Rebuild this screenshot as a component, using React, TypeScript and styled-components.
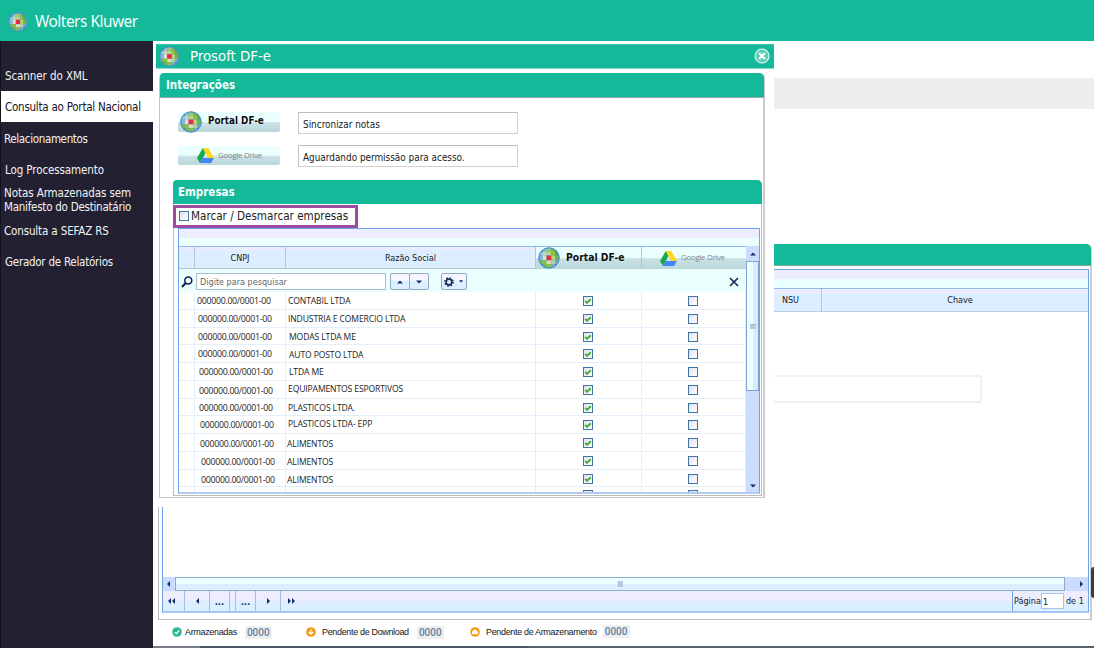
import React from "react";
import styled, { createGlobalStyle, css } from "styled-components";

const GREEN = "#13b999";
const UI = '"DejaVu Sans Condensed", "DejaVu Sans", sans-serif';
const HUM = '"Noto Sans", "Open Sans", sans-serif';

const Global = createGlobalStyle`
  * { box-sizing: border-box; }
  body { margin: 0; background: #fff; }
  button, input { margin: 0; padding: 0; border: 0; font: inherit; color: inherit; outline: 0; border-radius: 0; }
`;

const Page = styled.div`
  position: relative;
  width: 1094px;
  height: 648px;
  overflow: hidden;
  background: #fff;
  display: flex;
  flex-direction: column;
  font-family: ${UI};
  color: #222;
`;

const TopBar = styled.header`
  height: 41px;
  flex: none;
  display: flex;
  align-items: center;
  gap: 7px;
  padding: 2px 0 0 8px;
  background: ${GREEN};
  color: #f3fffc;
  font: 15.4px/39px ${HUM};
  letter-spacing: -0.48px;
`;

const Body = styled.div`
  display: flex;
  height: 607px;
`;

const Sidebar = styled.nav`
  width: 153px;
  flex: none;
  padding-top: 20px;
  background: #232131;
  border-left: 1px solid #15131f;
`;

const NavItem = styled.a<{ $h: number; $active?: boolean; $x?: number }>`
  display: flex;
  flex-direction: column;
  justify-content: center;
  height: ${(p) => p.$h}px;
  padding-left: ${(p) => p.$x ?? 3}px;
  font-size: 11.5px;
  line-height: 14px;
  white-space: nowrap;
  color: ${(p) => (p.$active ? "#15131f" : "#f2f2f5")};
  background: ${(p) => (p.$active ? "#fff" : "transparent")};
`;

const NavLine = styled.span<{ $track: number }>`
  letter-spacing: ${(p) => p.$track}px;
`;

const Main = styled.main`
  flex: 1;
  display: flex;
  flex-direction: column;
  padding: 37px 0 0 5px;
`;

const GrayBand = styled.div`
  height: 31px;
  margin-bottom: 135px;
  background: #eee;
`;

const BackPanel = styled.section`
  width: 934px;
  height: 376px;
  display: flex;
  flex-direction: column;
  border: 1px solid #bdbdbd;
  border-top: 0;
  border-right: 2px solid #ccc;
  border-radius: 0 5px 0 0;
`;

const BackTitle = styled.div`
  height: 22px;
  margin-right: -1px;
  background: ${GREEN};
  border-bottom: 1px solid #82a89f;
  border-radius: 0 5px 0 0;
`;

const BackGrid = styled.div`
  margin: 3px 1px 0 3px;
  height: 344px;
  display: flex;
  flex-direction: column;
  border: 1px solid #6da3ea;
  border-bottom: 2px solid #a3c6f5;
`;

const GroupStrip = styled.div<{ $h?: number }>`
  height: ${(p) => p.$h ?? 17}px;
  flex: none;
  background: linear-gradient(#eeecff 0 52%, #ebffff 52%);
`;

const BackHead = styled.div`
  display: flex;
  height: 24px;
  border-top: 1px solid #8fb6ee;
  border-bottom: 1px solid #bccfdd;
  background: linear-gradient(#ebecff 0 5px, #dceeff 5px);
  font-size: 9px;
  line-height: 22px;
  text-align: center;
`;

const BackCol = styled.div<{ $w?: number }>`
  ${(p) => (p.$w ? css`width: ${p.$w}px; border-right: 1px solid #b4c6d4;` : css`flex: 1; padding-left: 10px;`)}
`;

const NsuLabel = styled.div`
  width: 61px;
  margin-left: auto;
`;

const BackBody = styled.div`
  flex: 1;
  padding-top: 63px;
`;

const GhostInput = styled.div`
  width: 819px;
  height: 28px;
  border: 2px solid #efeff6;
  border-radius: 3px;
`;

const HScroll = styled.div`
  height: 14px;
  display: flex;
  background: #ccdcff;
`;

const HArrow = styled.div<{ $w: number; $push?: number; $pull?: number }>`
  width: ${(p) => p.$w}px;
  padding-left: ${(p) => p.$push ?? 0}px;
  padding-right: ${(p) => p.$pull ?? 0}px;
  display: grid;
  place-items: center;
`;

const HThumb = styled.div`
  flex: 1;
  display: grid;
  place-items: center;
  border: 1px solid #8aaecb;
  background: linear-gradient(#ebffff 50%, #dceeff 50%);
`;

const Grip = styled.i<{ $v?: boolean }>`
  width: ${(p) => (p.$v ? 6 : 5)}px;
  height: ${(p) => (p.$v ? 5 : 6)}px;
  background: #b5cce4;
  border-left: ${(p) => (p.$v ? 0 : 1)}px solid #9db8d2;
  border-top: ${(p) => (p.$v ? 1 : 0)}px solid #9db8d2;
`;

const Pager = styled.div`
  height: 20px;
  display: flex;
  background: linear-gradient(#eeecff 48%, #dceeff 48%);
  font-size: 9.5px;
`;

const PagerCell = styled.button<{ $w: number; $pull?: number }>`
  width: ${(p) => p.$w}px;
  padding-right: ${(p) => p.$pull ?? 0}px;
  background: none;
  border-right: 1px solid #9ebfdf;
  display: grid;
  place-items: center;
  color: #10316b;
  font-weight: bold;
`;

const PagerSpace = styled.div`
  flex: 1;
  padding-left: 6px;
  display: flex;
  align-items: center;
`;

const PageNum = styled.div`
  width: 76px;
  display: flex;
  align-items: center;
  padding-left: 1px;
  border-left: 1px solid #6da3ea;
  color: #222;
  font-size: 9px;
  white-space: nowrap;
  input {
    width: 23px;
    height: 16px;
    padding: 2px 0 0 1px;
    margin: 0 2px 0 0;
    border: 1px solid #a5c5ef;
    background: #fff;
    font-family: ${UI};
  }
`;

const Status = styled.footer`
  height: 24px;
  margin-bottom: 2px;
  display: flex;
  align-items: center;
  padding-left: 14px;
  font: 9px "Liberation Sans", Arial, sans-serif;
  letter-spacing: -0.34px;
  color: #16161c;
`;

const StatusItem = styled.div<{ $w: number; $gap: number }>`
  width: ${(p) => p.$w}px;
  display: flex;
  align-items: center;
  white-space: nowrap;
  svg { margin-right: ${(p) => p.$gap}px; flex: none; }
`;

const Counter = styled.b<{ $up?: boolean }>`
  margin: ${(p) => (p.$up ? "-2px 0 0 6px" : "0 0 0 8px")};
  width: 27px;
  height: 13px;
  background: #eeeeef;
  color: #64809b;
  font: 500 10px/13px Roboto, sans-serif;
  letter-spacing: 0;
  text-align: center;
`;

const BottomStrip = styled.div`
  height: 2px;
  margin-left: -5px;
  background: linear-gradient(90deg, #777d85 0 5%, #4c5562 5% 40%, #59616c 40%);
`;

const SideTab = styled.div`
  position: absolute;
  right: 0;
  top: 567px;
  width: 3px;
  height: 31px;
  border-radius: 3px 0 0 3px;
  background: #3c3c3e;
`;

const Dialog = styled.div`
  position: absolute;
  left: 155px;
  top: 43px;
  width: 619px;
  height: 464px;
  background: #fff;
`;

const DialogBar = styled.div`
  display: flex;
  align-items: center;
  height: 25px;
  margin: 1px 0 0 1px;
  padding: 0 4px 0 3px;
  background: ${GREEN};
  border-top: 1px solid #3fc7ad;
  border-bottom: 1px solid #8fdccc;
  color: #fff;
  svg { flex: none; }
`;

const DialogTitle = styled.h1`
  flex: 1;
  margin: -2px 0 0 10px;
  font: 14.8px/22px ${UI};
`;

const CloseButton = styled.button`
  width: 16px;
  height: 16px;
  margin-top: -1px;
  background: none;
  display: grid;
`;

const Group = styled.section`
  width: 606px;
  height: 425px;
  margin: 4px 0 0 4px;
  border: 1px solid #c6c6c8;
  border-top: 0;
  border-right: 2px solid #ccc;
  border-radius: 5px 5px 0 0;
`;

const GroupTitle = styled.h2`
  margin: 0 -1px 0 0;
  height: 25px;
  padding-left: 6px;
  background: ${GREEN};
  border-bottom: 1px solid #98a9a8;
  border-radius: 4px 5px 0 0;
  color: #f8fffd;
  font: bold 11.5px/24px ${UI};
`;

const Integrations = styled.div`
  height: 82px;
  padding: 14px 0 0 18px;
  display: flex;
  flex-direction: column;
`;

const IntegrationRow = styled.div`
  display: flex;
  align-items: flex-start;
  height: 33px;
  gap: 18px;
`;

const brandBg = css`
  background: linear-gradient(#ebffff 48%, #cbe1e5 54%, #b9d7dc);
`;

const BrandButton = styled.button`
  width: 102px;
  height: 20px;
  padding-left: 2px;
  display: flex;
  align-items: center;
  border-radius: 2px;
  ${brandBg}
`;

const DriveButton = styled(BrandButton)`
  height: 19px;
  margin-top: 1px;
  padding-left: 19px;
`;

const PortalName = styled.span<{ $big?: boolean }>`
  margin: -2px 0 0 6px;
  font: bold ${(p) => (p.$big ? 10.3 : 9.8)}px/16px "DejaVu Sans Condensed", sans-serif;
  color: #111;
`;

const DriveName = styled.span`
  margin: -2px 0 0 4px;
  font: 8px/14px "Open Sans", sans-serif;
  letter-spacing: -0.35px;
  color: #7d8789;
`;

const StatusField = styled.input`
  width: 220px;
  height: 22px;
  padding: 3px 0 0 4px;
  border: 1px solid #c9c9c9;
  border-color: #bdbdbd #d4d4d4 #d0d0d0 #c4c4c4;
  background: #fff;
  color: #222;
  font: 9.9px ${UI};
`;

const Companies = styled.section`
  width: 589px;
  height: 316px;
  margin-left: 13px;
  border: 1px solid #bbb;
  border-top: 0;
  border-radius: 5px 5px 0 0;
`;

const CompaniesTitle = styled(GroupTitle)`
  height: 24px;
  margin: 0 -1px;
  border-bottom: 0;
  padding-left: 5px;
  line-height: 25px;
`;

const MarkAll = styled.label`
  width: 185px;
  height: 23px;
  margin: 1px 0 0 -1px;
  display: flex;
  align-items: center;
  gap: 2px;
  padding: 0 0 2px 3px;
  border: 3px solid #9c4c9f;
  background: #fff;
  font-size: 11.6px;
`;

const Box = styled.span`
  width: 10px;
  height: 10px;
  flex: none;
  display: grid;
  place-items: center;
  border: 1px solid #3f74a2;
  background: linear-gradient(135deg, #e3e0f2, #fff);
`;

const Grid = styled.div`
  width: 582px;
  height: 266px;
  margin-left: 4px;
  display: flex;
  flex-direction: column;
  overflow: hidden;
  border: 1px solid #6da3ea;
  border-bottom: 2px solid #b1cbf2;
`;

const GridMain = styled.div`
  flex: 1;
  display: flex;
  min-height: 0;
`;

const GridArea = styled.div`
  width: 567px;
  overflow: hidden;
`;

const columns = css`
  display: grid;
  grid-template-columns: 16px 91px 250px 106px 104px;
`;

const HeadRow = styled.div`
  ${columns}
  height: 23px;
  border-top: 1px solid #8fb6ee;
  border-bottom: 1px solid #b3c8d8;
  background: linear-gradient(#ebecff 0 3px, #dceeff 3px);
  font-size: 9px;
  line-height: 21px;
  text-align: center;
`;

const HeadCell = styled.div<{ $brand?: "portal" | "drive" }>`
  border-right: 1px solid #b4c6d4;
  display: flex;
  align-items: center;
  justify-content: ${(p) => (p.$brand ? "flex-start" : "center")};
  padding-left: ${(p) => (p.$brand === "portal" ? 2 : p.$brand === "drive" ? 18 : 0)}px;
  min-width: 0;
  white-space: nowrap;
  ${(p) => p.$brand && brandBg}
  &:last-child { border-right: 0; }
`;

const SearchRow = styled.div`
  display: flex;
  align-items: center;
  height: 23px;
  padding: 2px 7px 0 2px;
  background: #ebffff;
`;

const SearchInput = styled.input`
  width: 190px;
  height: 17px;
  margin-left: 3px;
  padding-left: 3px;
  border: 1px solid #a6bfcf;
  background: #fff;
  font: 9px ${UI};
  &::placeholder { color: #666; opacity: 1; }
`;

const SmallButton = styled.button<{ $w: number; $ml?: number }>`
  width: ${(p) => p.$w}px;
  height: 17px;
  margin-left: ${(p) => p.$ml ?? 0}px;
  display: flex;
  align-items: center;
  justify-content: center;
  gap: 5px;
  border: 1px solid #91aac0;
  border-radius: 2px;
  background: linear-gradient(#f6f5ff 50%, #dceeff 50%);
`;

const ClearButton = styled.button`
  margin-left: auto;
  width: 10px;
  height: 10px;
  background: none;
  display: grid;
`;

const Row = styled.div`
  ${columns}
  height: 17.75px;
  border-bottom: 1px solid #e3f0fc;
  font-size: 9px;
  line-height: 17px;
  white-space: nowrap;
  background: #fff;
`;

const Cell = styled.div`
  border-right: 1px solid #e3f0fc;
  min-width: 0;
`;

const CheckCell = styled(Cell)<{ $last?: boolean }>`
  display: grid;
  place-items: center;
  padding-right: 1px;
  ${Box} { margin-top: ${(p) => (p.$last ? -1 : 1)}px; }
`;

const RowText = styled.span<{ $x: number; $y: number; $cnpj?: boolean }>`
  display: block;
  padding-left: ${(p) => p.$x}px;
  transform: translateY(${(p) => p.$y}px);
  font-family: "Open Sans", sans-serif;
  font-size: ${(p) => (p.$cnpj ? 8.8 : 8.6)}px;
  letter-spacing: ${(p) => (p.$cnpj ? "-0.3px" : "-0.14px")};
  color: #1c1c22;
`;

const VScroll = styled.div`
  width: 13px;
  display: flex;
  flex-direction: column;
  background: #ccdcff;
`;

const VArrow = styled.div<{ $h: number }>`
  height: ${(p) => p.$h}px;
  display: grid;
  place-items: center;
`;

const VThumb = styled.div`
  height: 130px;
  display: grid;
  place-items: center;
  border: 1px solid #7ba4cb;
  background: linear-gradient(90deg, #ebffff 50%, #dceaff 50%);
`;

const Spacer = styled.div`
  flex: 1;
`;

type Dir = "up" | "down" | "left" | "right";
const arrowPath: Record<Dir, string> = {
  up: "M0 3.5 L3 0.5 L6 3.5Z",
  down: "M0 0.5 L3 3.5 L6 0.5Z",
  left: "M4 0 L1 3 L4 6Z",
  right: "M1 0 L4 3 L1 6Z",
};

function Arrow({ dir, double, small }: { dir: Dir; double?: boolean; small?: boolean }) {
  const vertical = dir === "up" || dir === "down";
  const w = vertical ? 6 : double ? 8 : 5;
  const h = vertical ? 4 : 6;
  const k = small ? 0.7 : 1;
  return (
    <svg width={w * k} height={h * k} viewBox={`0 0 ${w} ${h}`} fill="#0d2f6e">
      <path d={arrowPath[dir]} />
      {double && <path d={arrowPath[dir]} transform="translate(4 0)" />}
    </svg>
  );
}

const mosaic = [
  ["#2f7fc4", "#9cc4c8", "#9fc777", "#7dbb4a", "#2f7fc4"],
  ["#a4c8dc", "#c3d9bd", "#b9d58b", "#8fc240", "#62ad3e"],
  ["#8fb6dc", "#d5e3cf", "#ec2a40", "#b4d37c", "#6fb545"],
  ["#7dbb4a", "#8fbe3f", "#d3e3b9", "#b7d3a4", "#79a9cf"],
  ["#2f7fc4", "#7cb93e", "#86bf52", "#7badcb", "#2f7fc4"],
];
const stops = [1, 5, 8.6, 13.4, 17, 21];

function Globe({ size }: { size: number }) {
  return (
    <svg width={size} height={size} viewBox="0 0 22 22">
      <defs>
        <clipPath id="disc">
          <circle cx="11" cy="11" r="10" />
        </clipPath>
      </defs>
      <circle cx="11" cy="11" r="10.6" fill="#3a8fd0" />
      <g clipPath="url(#disc)">
        {mosaic.map((line, r) =>
          line.map((c, i) => (
            <rect
              key={`${r}-${i}`}
              x={stops[i]}
              y={stops[r]}
              width={stops[i + 1] - stops[i] + 0.05}
              height={stops[r + 1] - stops[r] + 0.05}
              fill={c}
            />
          ))
        )}
      </g>
      <circle cx="11" cy="11" r="10.1" fill="none" stroke="#4595d2" strokeWidth="1" />
    </svg>
  );
}

function DriveLogo() {
  return (
    <svg width="17" height="15" viewBox="0 0 17 15">
      <path d="M5.8 0 L0 10 L2.9 15 L8.6 5Z" fill="#18a94c" />
      <path d="M5.8 0 H11.3 L17 10 H11.4Z" fill="#ffd71f" />
      <path d="M5.7 10 H17 L14.1 15 H2.9Z" fill="#4486f8" />
    </svg>
  );
}

function Check() {
  return (
    <svg width="8" height="8" viewBox="0 0 8 8" fill="none" stroke="#3fb335" strokeWidth="1.9">
      <path d="M1.2 3.8 L3 5.8 L6.8 2.2" />
    </svg>
  );
}

function Magnifier() {
  return (
    <svg width="12" height="12" viewBox="0 0 12 12" fill="none" stroke="#111f4d">
      <circle cx="7.3" cy="4.4" r="3.5" strokeWidth="1.5" />
      <path d="M4.7 7 L1 11" strokeWidth="2.1" />
    </svg>
  );
}

function Gear() {
  return (
    <svg width="10" height="10" viewBox="0 0 10 10" fill="none" stroke="#17305e">
      <circle cx="5" cy="5" r="2.9" strokeWidth="1.6" />
      <circle cx="5" cy="5" r="4.1" strokeWidth="1.5" strokeDasharray="1.6 1.62" />
    </svg>
  );
}

const companies: [string, number, number, number, number][] = [
  ["CONTABIL LTDA", 2, 1, 2, 1],
  ["INDUSTRIA E COMERCIO LTDA", 3, 1, 2, 1],
  ["MODAS LTDA ME", 3, 1, 3, 1],
  ["AUTO POSTO LTDA", 3, 1, 3, 2],
  ["LTDA ME", 4, 1, 3, 1],
  ["EQUIPAMENTOS ESPORTIVOS", 4, 2, 2, 0],
  ["PLASTICOS LTDA.", 4, 1, 2, 1],
  ["PLASTICOS LTDA- EPP", 5, 1, 2, 0],
  ["ALIMENTOS", 5, 2, 1, 2],
  ["ALIMENTOS", 6, 2, 1, 2],
  ["ALIMENTOS", 6, 2, 1, 2],
  ["", 6, 0, 1, 0],
];

type MenuItem = { lines: [string, number][]; h: number; x?: number; active?: boolean };
const menu: MenuItem[] = [
  { lines: [["Scanner do XML", -0.08]], h: 30, x: 4 },
  { lines: [["Consulta ao Portal Nacional", -0.24]], h: 31, x: 4, active: true },
  { lines: [["Relacionamentos", -0.35]], h: 33 },
  { lines: [["Log Processamento", -0.1]], h: 29, x: 4 },
  { lines: [["Notas Armazenadas sem", -0.08], ["Manifesto do Destinatário", -0.25]], h: 31 },
  { lines: [["Consulta a SEFAZ RS", -0.14]], h: 31 },
  { lines: [["Gerador de Relatórios", -0.25]], h: 32, x: 4 },
];

function CompanyGrid() {
  return (
    <Grid>
      <GroupStrip />
      <GridMain>
        <GridArea>
          <HeadRow>
            <HeadCell />
            <HeadCell>CNPJ</HeadCell>
            <HeadCell>Razão Social</HeadCell>
            <HeadCell $brand="portal">
              <Globe size={22} />
              <PortalName $big>Portal DF-e</PortalName>
            </HeadCell>
            <HeadCell $brand="drive">
              <DriveLogo />
              <DriveName>Google Drive</DriveName>
            </HeadCell>
          </HeadRow>
          <SearchRow>
            <Magnifier />
            <SearchInput placeholder="Digite para pesquisar" />
            <SmallButton $w={20} $ml={4}><Arrow dir="up" /></SmallButton>
            <SmallButton $w={20} $ml={-1}><Arrow dir="down" /></SmallButton>
            <SmallButton $w={26} $ml={12}><Gear /><Arrow dir="down" small /></SmallButton>
            <ClearButton>
              <svg width="10" height="10" viewBox="0 0 10 10" stroke="#14234f" strokeWidth="1.6">
                <path d="M1 1 L9 9 M9 1 L1 9" />
              </svg>
            </ClearButton>
          </SearchRow>
          {companies.map(([name, cx, cy, nx, ny], i) => (
            <Row key={i}>
              <Cell />
              <Cell>{name && <RowText $cnpj $x={cx} $y={cy}>000000.00/0001-00</RowText>}</Cell>
              <Cell><RowText $x={nx} $y={ny}>{name}</RowText></Cell>
              <CheckCell $last={!name}><Box><Check /></Box></CheckCell>
              <CheckCell $last={!name}><Box /></CheckCell>
            </Row>
          ))}
        </GridArea>
        <VScroll>
          <VArrow $h={15}><Arrow dir="up" /></VArrow>
          <VThumb><Grip $v /></VThumb>
          <Spacer />
          <VArrow $h={13}><Arrow dir="down" /></VArrow>
        </VScroll>
      </GridMain>
    </Grid>
  );
}

function IntegrationDialog() {
  return (
    <Dialog>
      <DialogBar>
        <Globe size={21} />
        <DialogTitle>Prosoft DF-e</DialogTitle>
        <CloseButton>
          <svg width="16" height="16" viewBox="0 0 16 16" fill="none" stroke="#e6faf6">
            <circle cx="8" cy="8" r="7" strokeWidth="1.1" fill="#5ecdb6" />
            <path d="M5 5 L11 11 M11 5 L5 11" strokeWidth="2" stroke="#fff" />
          </svg>
        </CloseButton>
      </DialogBar>
      <Group>
        <GroupTitle>Integrações</GroupTitle>
        <Integrations>
          <IntegrationRow>
            <BrandButton>
              <Globe size={22} />
              <PortalName>Portal DF-e</PortalName>
            </BrandButton>
            <StatusField readOnly value="Sincronizar notas" />
          </IntegrationRow>
          <IntegrationRow>
            <DriveButton>
              <DriveLogo />
              <DriveName>Google Drive</DriveName>
            </DriveButton>
            <StatusField readOnly value="Aguardando permissão para acesso." />
          </IntegrationRow>
        </Integrations>
        <Companies>
          <CompaniesTitle>Empresas</CompaniesTitle>
          <MarkAll><Box />Marcar / Desmarcar empresas</MarkAll>
          <CompanyGrid />
        </Companies>
      </Group>
    </Dialog>
  );
}

export default function App() {
  return (
    <Page>
      <Global />
      <TopBar><Globe size={20} />Wolters Kluwer</TopBar>
      <Body>
        <Sidebar>
          {menu.map((m) => (
            <NavItem key={m.lines[0][0]} $h={m.h} $x={m.x} $active={m.active}>
              {m.lines.map(([text, track]) => (
                <NavLine key={text} $track={track}>{text}</NavLine>
              ))}
            </NavItem>
          ))}
        </Sidebar>
        <Main>
          <GrayBand />
          <BackPanel>
            <BackTitle />
            <BackGrid>
              <GroupStrip $h={18} />
              <BackHead>
                <BackCol $w={659}><NsuLabel>NSU</NsuLabel></BackCol>
                <BackCol>Chave</BackCol>
              </BackHead>
              <BackBody><GhostInput /></BackBody>
              <HScroll>
                <HArrow $w={12} $pull={2}><Arrow dir="left" /></HArrow>
                <HThumb><Grip /></HThumb>
                <HArrow $w={23} $push={9}><Arrow dir="right" /></HArrow>
              </HScroll>
              <Pager>
                <PagerCell $w={22} $pull={5}><Arrow dir="left" double /></PagerCell>
                <PagerCell $w={25}><Arrow dir="left" /></PagerCell>
                <PagerCell $w={20}>...</PagerCell>
                <PagerCell $w={6} />
                <PagerCell $w={20}>...</PagerCell>
                <PagerCell $w={25}><Arrow dir="right" /></PagerCell>
                <PagerSpace><Arrow dir="right" double /></PagerSpace>
                <PageNum>Página<input readOnly value="1" />de 1</PageNum>
              </Pager>
            </BackGrid>
          </BackPanel>
          <Status>
            <StatusItem $w={134} $gap={3}>
              <svg width="10" height="10" viewBox="0 0 10 10">
                <circle cx="5" cy="5" r="4.8" fill="#2fb896" />
                <path d="M2.8 5.1 L4.4 6.6 L7.3 3.5" fill="none" stroke="#fff" strokeWidth="1.3" />
              </svg>
              Armazenadas<Counter>0000</Counter>
            </StatusItem>
            <StatusItem $w={164} $gap={6}>
              <svg width="10" height="10" viewBox="0 0 10 10">
                <circle cx="5" cy="5" r="4.8" fill="#f49b17" />
                <path d="M5 2.2 V7 M2.8 5 L5 7.2 L7.2 5" fill="none" stroke="#fff" strokeWidth="1.2" />
              </svg>
              Pendente de Download<Counter>0000</Counter>
            </StatusItem>
            <StatusItem $w={170} $gap={6}>
              <svg width="10" height="10" viewBox="0 0 10 10">
                <circle cx="5" cy="5" r="4.8" fill="#f49b17" />
                <path d="M2.9 7.2 A1.6 1.6 0 0 1 2.7 4.2 A2.4 2.4 0 0 1 7.3 4.2 A1.6 1.6 0 0 1 7.1 7.2Z" fill="#fff" />
              </svg>
              Pendente de Armazenamento<Counter $up>0000</Counter>
            </StatusItem>
          </Status>
          <BottomStrip />
        </Main>
      </Body>
      <IntegrationDialog />
      <SideTab />
    </Page>
  );
}
